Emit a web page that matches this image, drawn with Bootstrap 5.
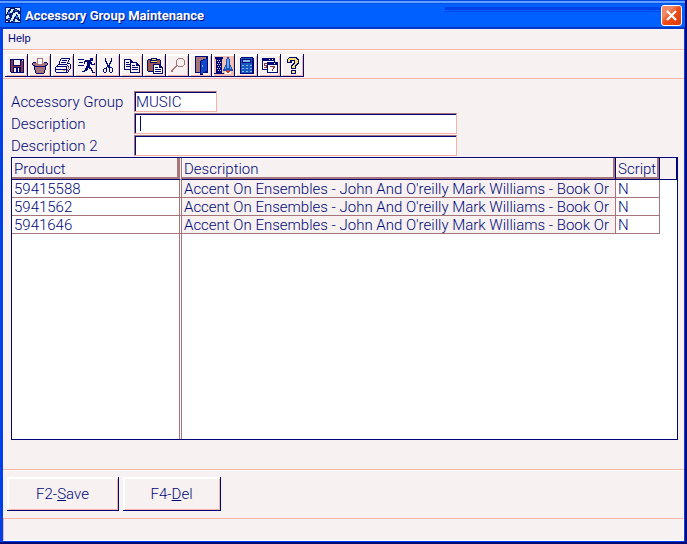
<!DOCTYPE html>
<html lang="en">
<head>
<meta charset="utf-8">
<meta name="viewport" content="width=device-width, initial-scale=1">
<title>Accessory Group Maintenance</title>
<link href="https://cdn.jsdelivr.net/npm/bootstrap@5.3.0/dist/css/bootstrap.min.css" rel="stylesheet">
<style>
:root{--ink:#000878;--face:#f7f1f1;--rose:#f4b5a8;--mauve:#a5757a}
body{background:var(--face);color:var(--ink);font-family:Roboto,"Liberation Sans",Arial,sans-serif;font-weight:300;font-size:15px;line-height:18px}
.app-window{border:solid #0040e8;border-width:0 1px 1px 3px;background:var(--face)}
.app-frame{background:var(--ink);padding:0 2px 2px 0}
.title-strip{height:29px;flex:none;margin:0 -1px 0 -3px;padding:3px 3px 0 5px;background:linear-gradient(#0048e8 0 1px,#60a0ff 1px 3px,#0050f0 3px 4px,#0060ff 4px 27px,#0038c8 27px)}
.title-strip h1{font:700 13px/26px Roboto,sans-serif;color:#fff;text-shadow:1px 1px #001078}
.title-shade{border-top:3px solid #0040e8;border-bottom:1px solid #0048e8;height:5px;width:216px;margin-top:4px}
.close-btn{width:21px;height:21px;flex:none;margin-top:2px;border:1px solid #fff;border-radius:3px;background:linear-gradient(135deg,#f08868 0 30%,#f04c18 50%,#d83808)}
.menu-strip{height:21px;flex:none;border-bottom:1px solid var(--rose);font:11px "Liberation Sans",Arial,sans-serif;padding-left:5px}
.menu-strip a{color:var(--ink);line-height:18px}
.tool-strip{height:29px;flex:none;border-top:1px solid #fff;border-bottom:1px solid var(--rose);padding:3px 0 0 2px}
.tool-btn{width:23px;height:23px;flex:none;border:solid var(--ink);border-width:0 1px 1px 0;background:var(--face);box-shadow:inset 2px 2px #fff,inset -1px -1px var(--rose)}
.tool-btn svg{display:block;width:23px;height:24px}
.entry-form{padding:12px 6px 0 8px}
.entry-line{height:22px}
.entry-line label{width:123px;flex:none;padding-top:2px}
.entry-line input{height:21px;color:var(--ink);background:#fff;border:1px solid var(--mauve);border-right-color:var(--rose);border-bottom-color:var(--rose);box-shadow:inset 1px 1px var(--ink);border-radius:0;outline:0;font-size:15px;font-weight:300;line-height:18px}
.code-box{width:83px;padding:0 1px}
.text-box{width:323px;padding:0 5px}
.entry-line .text-box:focus{background:linear-gradient(var(--ink),var(--ink)) 5px 2px/1px 15px no-repeat #fff;caret-color:transparent}
.grid-box{margin:0 6px 0 8px;border:1px solid var(--ink);background:#fff}
.grid-box table{table-layout:fixed;border-collapse:separate;border-spacing:0}
.grid-box th{height:22px;font-weight:300;background:var(--face);border-right:1px solid var(--ink);border-bottom:1px solid var(--ink);padding:1px 2px 0;box-shadow:inset -2px -2px var(--mauve),inset 1px 1px #fff}
.grid-box th.spare{box-shadow:none}
.grid-box td{height:18px;line-height:16px;padding:1px 2px 0;border-right:1px solid var(--mauve);border-bottom:1px solid var(--mauve);white-space:nowrap;overflow:hidden}
.grid-box td.desc{background:var(--face)}
.grid-box .split{border-right:3px double var(--mauve)}
.grid-box td.spare{border:0}
.grid-box .filler td{height:auto;border-bottom:0;border-right-color:transparent}
.grid-box .filler td.split{border-right-color:var(--mauve)}
.col-product{width:170px}.col-script{width:44px}.col-spare{width:17px}
.action-strip{margin-top:29px;height:49px;border-top:1px solid var(--rose);box-shadow:inset 0 1px #fff;padding:7px 4px 0}
.action-btn{height:34px;color:var(--ink);background:var(--face);border:solid var(--ink);border-width:0 1px 1px 0;box-shadow:inset 2px 2px #fff,inset -1px -1px var(--rose);font-size:15px;font-weight:300}
.save-btn{width:112px}.del-btn{width:98px}
.status-strip{height:23px;flex:none;border:solid #fff;border-width:0 1px 1px 0;border-top:1px solid var(--rose);border-left:1px solid var(--rose)}
</style>
<script src="https://cdn.jsdelivr.net/npm/bootstrap@5.3.0/dist/js/bootstrap.bundle.min.js"></script>
</head>
<body>
<div class="app-frame vh-100">
<div class="app-window d-flex flex-column h-100">
<header class="title-strip d-flex">
<svg class="flex-shrink-0 mt-1" width="16" height="16" viewBox="0 0 16 16" shape-rendering="crispEdges" aria-hidden="true"><path fill="#001878" d="M0 0h16v16H0z"/><path fill="#dcecff" d="M1 1h4v1H4v1H3v2H2v2H1zM6 2h3v1H8v2H7v1H5V4h1zM10 1h5v3h-1V3h-2V2h-2zM8 6h2V5h3v3h-1V7h-1v2h-1v1H9v2H8v2H6v1H5v-2h1v-2h1V8h1zM2 8h2v2h1v1H3v1H1V9h1zM13 7h2v5h-1v-2h-1zM1 14h2v1H1zM10 12h2v1h1v1h2v1h-5z"/><path fill="#3478e0" d="M3 5h2v2H3zM10 3h2v1h-2zM11 9h2v2h-2zM3 12h2v1H3zM8 14h2v1H8z"/></svg>
<h1 class="mb-0 ms-1 flex-grow-1 text-nowrap">Accessory Group Maintenance</h1>
<div class="title-shade"></div>
<button class="close-btn p-0 d-flex" type="button" aria-label="Close"><svg width="19" height="19" viewBox="0 0 19 19" aria-hidden="true"><path d="M5 5l9 9M14 5l-9 9" stroke="#fff" stroke-width="2.3"/></svg></button>
</header>
<nav class="menu-strip"><a class="d-inline-block text-decoration-none" href="#">Help</a></nav>
<div class="tool-strip d-flex" role="toolbar" aria-label="Tools">
<button class="tool-btn p-0" type="button" aria-label="Save"><svg viewBox="0 0 23 24" shape-rendering="crispEdges"><path fill="#000878" d="M5 5h14v14H6v-1H5z"/><path fill="#903838" d="M6 6h2v12H6zM16 7h2v11h-2zM8 12h8v1H8z"/><path fill="#f7f1f1" d="M9 6h6v5H9zM9 14h2v4H9zM13 14h1v4h-1zM17 6h1v1h-1z"/></svg></button>
<button class="tool-btn p-0" type="button" aria-label="Discard"><svg viewBox="0 0 23 24" shape-rendering="crispEdges"><path fill="#a5757a" d="M5 9h14v3H5zM6 12h12v3h-1v4h-1v1H8v-1H7v-4H6zM9 4h6v7H9z"/><path fill="#fff" d="M10 5h4v5h-4z"/><path fill="#000878" d="M5 8h3v1H5zM16 8h3v1h-3zM4 9h1v2H4zM19 9h1v2h-1zM5 11h2v1H5zM17 11h2v1h-2zM7 12h10v1H7zM6 12h1v4H6zM17 12h1v4h-1zM7 16h1v3H7zM16 16h1v3h-1zM8 19h8v1H8z"/></svg></button>
<button class="tool-btn p-0" type="button" aria-label="Print"><svg viewBox="0 0 23 24" shape-rendering="crispEdges"><path fill="#f7f1f1" d="M10 5h8v2h-1v3h2v5h-2v3H5v-6h3V8h2z"/><path fill="#000878" d="M10 4h9v1h-9zM9 5h1v2H9zM18 5h1v1h-1zM8 7h1v3H8zM17 6h1v2h-1zM16 8h1v2h-1zM11 6h5v1h-5zM10 8h5v1h-5zM7 10h9v1H7zM6 11h1v1H6zM17 9h2v1h-2zM19 10h1v5h-1zM5 12h11v1H5zM4 13h1v5H4zM16 11h1v1h-1zM15 13h1v5h-1zM17 12h1v1h-1zM18 15h1v1h-1zM17 16h1v2h-1zM5 15h10v1H5zM5 18h12v1H5z"/><path fill="#c8a040" d="M12 16h2v1h-2z"/><path fill="#a5757a" d="M17 13h1v2h-1zM16 15h1v2h-1z"/></svg></button>
<button class="tool-btn p-0" type="button" aria-label="Run"><svg viewBox="0 0 23 24" shape-rendering="crispEdges"><path fill="#000878" d="M16 4h3v3h-3zM11 6h5v1h1v1h1v2h2V9h1v2h-4v-1h-1v3h1v1h1v2h1v2h2v1h-3v-2h-1v-2h-2v-1h-1v2h-1v1h-2v1H8v-1h2v-1h1v-2h1v-2h1V8h-2v2h-1V7h1zM4 5h6v1H4zM5 8h4v1H5zM4 11h6v1H4z"/></svg></button>
<button class="tool-btn p-0" type="button" aria-label="Cut"><svg viewBox="0 0 23 24" shape-rendering="crispEdges"><path fill="#000878" d="M8 4h1v3h1v2h1v2h1V9h1V7h1V4h1v4h-1v2h-1v3h2v1h1v4h-1v1h-2v-1h-1v-4h-1v-1h-1v5H9v1H7v-1H6v-3h1v-1h2v-1h1v-3H9V8H8zM7 15v3h2v-3zM13 14v4h2v-4z"/></svg></button>
<button class="tool-btn p-0" type="button" aria-label="Copy"><svg viewBox="0 0 23 24" shape-rendering="crispEdges"><path fill="#000878" d="M4 5h7v1h1v1h1v9H4z"/><path fill="#f7f1f1" d="M5 6h5v3h2v6H5z"/><path fill="#000878" d="M6 8h3v1H6zM6 10h5v1H6zM6 12h5v1H6zM10 8h7v1h1v1h1v1h1v8H10z"/><path fill="#f7f1f1" d="M11 9h5v3h3v6h-8z"/><path fill="#000878" d="M12 11h3v1h-3zM12 13h6v1h-6zM12 15h6v1h-6z"/></svg></button>
<button class="tool-btn p-0" type="button" aria-label="Paste"><svg viewBox="0 0 23 24" shape-rendering="crispEdges"><path fill="#000878" d="M5 5h12v1h1v12H5v-1H4V6h1z"/><path fill="#985850" d="M5 6h12v11H5z"/><path fill="#000878" d="M8 4h6v5H7V6h1z"/><path fill="#f0e060" d="M9 5h4v1H9zM8 7h6v1H8z"/><path fill="#000878" d="M10 10h7v1h1v1h1v1h1v7H10z"/><path fill="#fff" d="M11 11h5v3h3v5h-8z"/><path fill="#000878" d="M12 13h3v1h-3zM12 15h6v1h-6zM12 17h6v1h-6z"/></svg></button>
<button class="tool-btn p-0" type="button" aria-label="Find"><svg viewBox="0 0 23 24" shape-rendering="crispEdges"><path fill="#a5757a" d="M12 4h5v1h1v1h1v5h-1v1h-1v1h-5v-1h-1v1h-1v1H9v1H8v1H7v2H5v-2h1v-1h1v-1h1v-1h1v-1h1V6h1V5h1zM12 5v1h-1v5h1v1h5v-1h1V6h-1V5z"/></svg></button>
<button class="tool-btn p-0" type="button" aria-label="Exit"><svg viewBox="0 0 23 24" shape-rendering="crispEdges"><path fill="#000878" d="M6 2h13v17h-5v2h-3v-2H6z"/><path fill="#a5757a" d="M7 3h10v2h-3v1h-2v1h-1v11H7z"/><path fill="#1048c8" d="M12 7h2V6h2V5h2v12h-2v1h-2v2h-2z"/><path fill="#78b8ff" d="M13 11h1v2h-1z"/></svg></button>
<button class="tool-btn p-0" type="button" aria-label="Launch"><svg viewBox="0 0 23 24" shape-rendering="crispEdges"><path fill="#f4c0b4" d="M2 2h19v19H2z"/><path fill="#000878" d="M3 3h8v2h-1v14h2v1H2v-1h2V5H3z"/><path fill="#e8d0d0" d="M5 6h1v1H5zM7 6h1v1H7zM6 8h1v1H6zM8 8h1v1H8zM5 10h1v1H5zM7 10h1v1H7zM6 12h1v1H6zM8 12h1v1H8zM5 14h1v1H5zM7 14h1v1H7zM6 16h1v1H6zM8 16h1v1H8z"/><path fill="#1850b8" d="M15 3h2v2h1v6h1v2h1v2h1v2h-4v-1h-2v1h-4v-2h1v-2h1v-2h1V5h1z"/><path fill="#68a8f8" d="M15 5h2v9h-2zM13 13h1v2h-1zM18 13h1v2h-1z"/><path fill="#fff" d="M13 17h6v3h-6z"/><path fill="#e03818" d="M15 16h2v1h1v1h-1v1h-2v-1h-1v-1h1z"/></svg></button>
<button class="tool-btn p-0" type="button" aria-label="Calculator"><svg viewBox="0 0 23 24" shape-rendering="crispEdges"><path fill="#000878" d="M6 3h12v1h1v16H5V4h1z"/><path fill="#1858c0" d="M6 4h11v15H6z"/><path fill="#000878" d="M7 5h9v4H7z"/><path fill="#88b8e8" d="M8 6h7v2H8zM7 11h2v1H7zM11 11h2v1h-2zM15 11h2v1h-2zM7 14h2v1H7zM11 14h2v1h-2zM15 14h2v1h-2zM7 17h2v1H7zM11 17h2v1h-2zM15 17h2v1h-2z"/></svg></button>
<button class="tool-btn p-0" type="button" aria-label="Calendar"><svg viewBox="0 0 23 24" shape-rendering="crispEdges"><path fill="#000878" d="M4 4h13v12H4z"/><path fill="#fff" d="M5 7h11v8H5z"/><path fill="#903838" d="M6 9h3v1H7v1h2v3H6v-1h2v-1H6z"/><path fill="#000878" d="M9 8h11v11H9z"/><path fill="#fff" d="M10 11h9v7h-9zM11 5h1v1h-1zM14 5h1v1h-1zM16 9h1v1h-1z"/><path fill="#903838" d="M12 12h5v2h-1v1h-1v2h-1v-2h1v-2h-3z"/></svg></button>
<button class="tool-btn p-0" type="button" aria-label="Help topics"><svg viewBox="0 0 23 24" shape-rendering="crispEdges"><path fill="#000878" d="M8 3h8v1h1v1h1v5h-1v1h-1v1h-1v3h-5v-4h1v-1h1V9h1V7h-2v2H6V5h1V4h1zM10 16h5v4h-5z"/><path fill="#f4e070" d="M8 4h7v1h1v1h1v3h-1v1h-1v1h-1v3h-3v-2h1v-1h1v-1h1V6H9v2H7V5h1zM11 17h3v2h-3z"/></svg></button>
</div>
<main class="d-flex flex-column flex-grow-1">
<form class="entry-form">
<div class="entry-line d-flex"><label for="group">Accessory Group</label><input class="code-box" id="group" value="MUSIC"></div>
<div class="entry-line d-flex"><label for="desc1">Description</label><input class="text-box" id="desc1" autofocus></div>
<div class="entry-line d-flex"><label for="desc2">Description 2</label><input class="text-box" id="desc2"></div>
</form>
<div class="grid-box flex-grow-1 d-flex">
<table class="w-100">
<colgroup><col class="col-product"><col><col class="col-script"><col class="col-spare"></colgroup>
<thead><tr><th class="split" scope="col">Product</th><th scope="col">Description</th><th scope="col">Script</th><th class="spare" aria-label="Blank"></th></tr></thead>
<tbody>
<tr><td class="split">59415588</td><td class="desc">Accent On Ensembles - John And O'reilly Mark Williams - Book Or</td><td>N</td><td class="spare"></td></tr>
<tr><td class="split">5941562</td><td class="desc">Accent On Ensembles - John And O'reilly Mark Williams - Book Or</td><td>N</td><td class="spare"></td></tr>
<tr><td class="split">5941646</td><td class="desc">Accent On Ensembles - John And O'reilly Mark Williams - Book Or</td><td>N</td><td class="spare"></td></tr>
<tr class="filler"><td class="split"></td><td></td><td></td><td class="spare"></td></tr>
</tbody>
</table>
</div>
<div class="action-strip d-flex gap-1">
<button class="action-btn save-btn" type="button">F2-<u>S</u>ave</button>
<button class="action-btn del-btn" type="button">F4-<u>D</u>el</button>
</div>
</main>
<footer class="status-strip"></footer>
</div>
</div>
</body>
</html>
